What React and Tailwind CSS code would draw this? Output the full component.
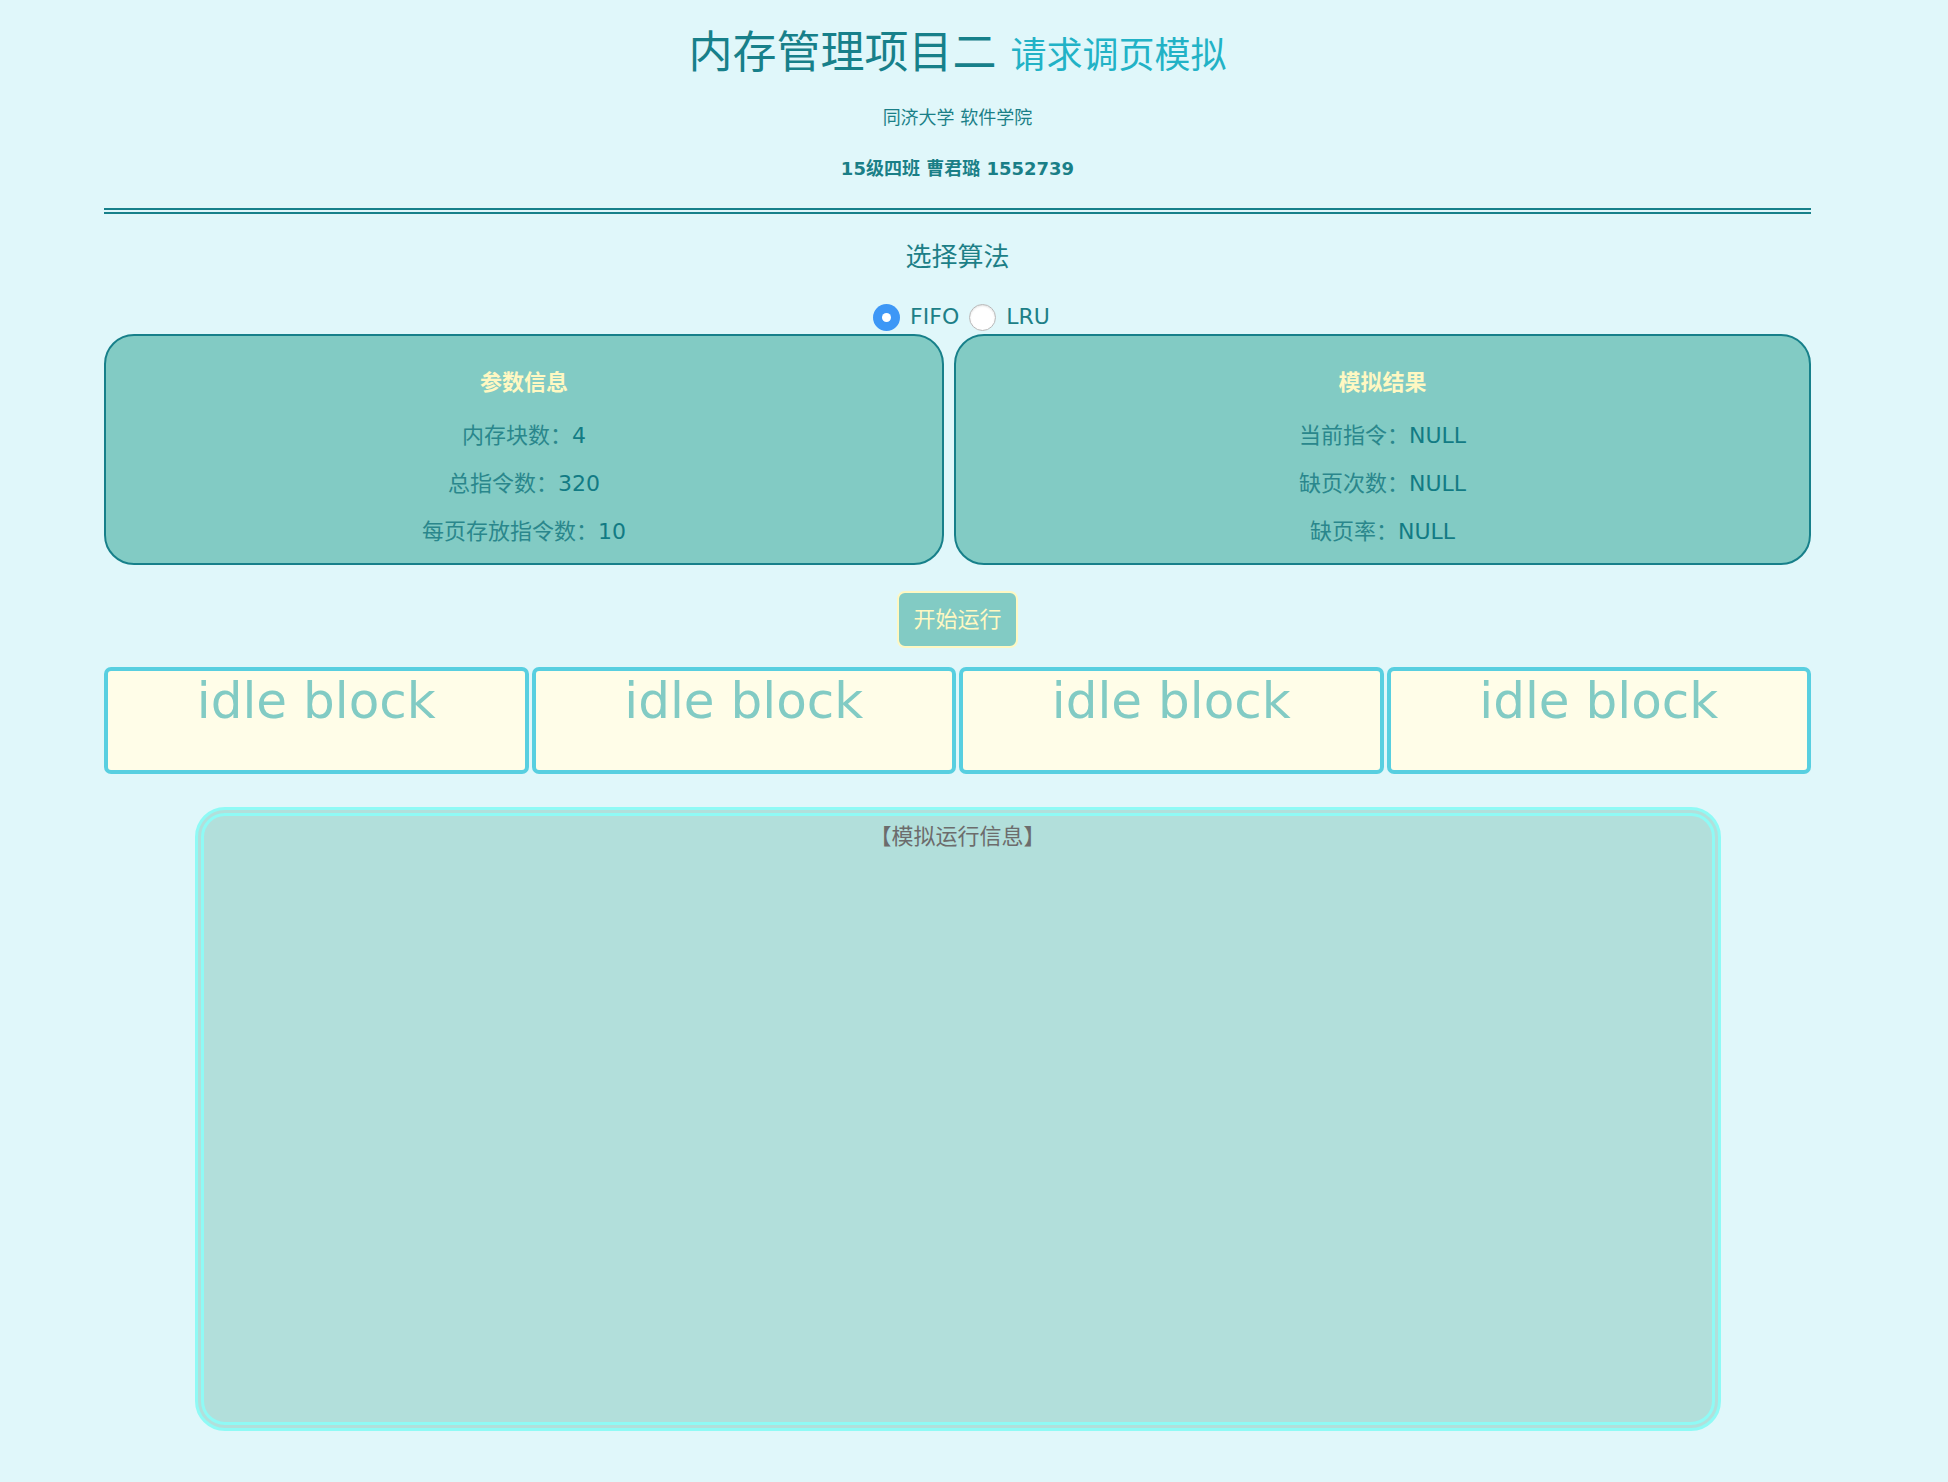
const PARAMS = [
  ["内存块数：", "4"],
  ["总指令数：", "320"],
  ["每页存放指令数：", "10"],
];

const RESULTS = [
  ["当前指令：", "NULL"],
  ["缺页次数：", "NULL"],
  ["缺页率：", "NULL"],
];

function Radio({ checked, label }) {
  return (
    <label className="flex items-center gap-[10px]">
      {checked ? (
        <span className="w-[27px] h-[27px] rounded-full bg-[#3d97f6] flex items-center justify-center">
          <span className="w-[9px] h-[9px] rounded-full bg-white" />
        </span>
      ) : (
        <span className="w-[27px] h-[27px] rounded-full bg-white border border-[#b8b8b8] shadow-[inset_0_1px_2px_rgba(0,0,0,0.12)]" />
      )}
      <span className="text-[22px] leading-[28px] text-[#1d7f87]">{label}</span>
    </label>
  );
}

function InfoCard({ title, rows }) {
  return (
    <div className="h-[231px] rounded-[30px] border-2 border-[#17808a] bg-[#82cbc4] pt-[23px] text-center">
      <div className="text-[22px] leading-[48px] font-bold text-[#fff8c2] mb-[5px]">{title}</div>
      {rows.map(([k, v]) => (
        <div key={k} className="text-[22px] leading-[48px] text-[#2a878c]">
          {k}
          <span className="text-[#127b84]">{v}</span>
        </div>
      ))}
    </div>
  );
}

export default function App() {
  return (
    <div className="min-h-screen bg-[#e0f7fa] font-['DejaVu_Sans','Noto_Sans_CJK_SC',sans-serif] pb-[53px]">
      <div className="ml-[104px] w-[1707px]">
        <h1 className="pt-[31px] text-center text-[44px] leading-[44px] text-[#17808a]">
          内存管理项目二 <span className="text-[36px] text-[#22b2c6]">请求调页模拟</span>
        </h1>
        <p className="mt-[31px] text-center text-[18px] leading-[18px] text-[#1a7f87]">同济大学 软件学院</p>
        <p className="mt-[33px] text-center text-[18px] leading-[18px] font-bold text-[#1a7f87]">
          15级四班 曹君璐 1552739
        </p>
        <div className="mt-[30px] border-t-[6px] border-double border-[#17808a]" />

        <h2 className="mt-[30px] text-center text-[26px] leading-[26px] text-[#1d7f87]">选择算法</h2>
        <div className="mt-[33px] pl-[8px] flex justify-center gap-[10px]">
          <Radio checked label="FIFO" />
          <Radio label="LRU" />
        </div>

        <div className="mt-[3px] grid grid-cols-[840px_857px] gap-[10px]">
          <InfoCard title="参数信息" rows={PARAMS} />
          <InfoCard title="模拟结果" rows={RESULTS} />
        </div>

        <div className="mt-[26px] flex justify-center">
          <button className="h-[57px] px-[14px] rounded-[8px] border-2 border-[#fff8c2] bg-[#82cbc4] text-[22px] text-[#fff8c2]">
            开始运行
          </button>
        </div>

        <div className="mt-[19px] grid grid-cols-4 gap-[3px]">
          {[0, 1, 2, 3].map((i) => (
            <div
              key={i}
              className="h-[107px] rounded-[7px] border-4 border-[#58cfe0] bg-[#fffde8] text-center text-[50px] leading-[60px] text-[#82cbc4]"
            >
              idle block
            </div>
          ))}
        </div>

        <div className="mx-auto mt-[33px] w-[1526px] h-[624px] rounded-[30px] border-[9px] border-double border-[#8ffaf5] bg-[#b2dfdb] pt-[4px] text-center">
          <p className="text-[22px] leading-[33px] text-[#6c6c6c]">【模拟运行信息】</p>
        </div>
      </div>
    </div>
  );
}
